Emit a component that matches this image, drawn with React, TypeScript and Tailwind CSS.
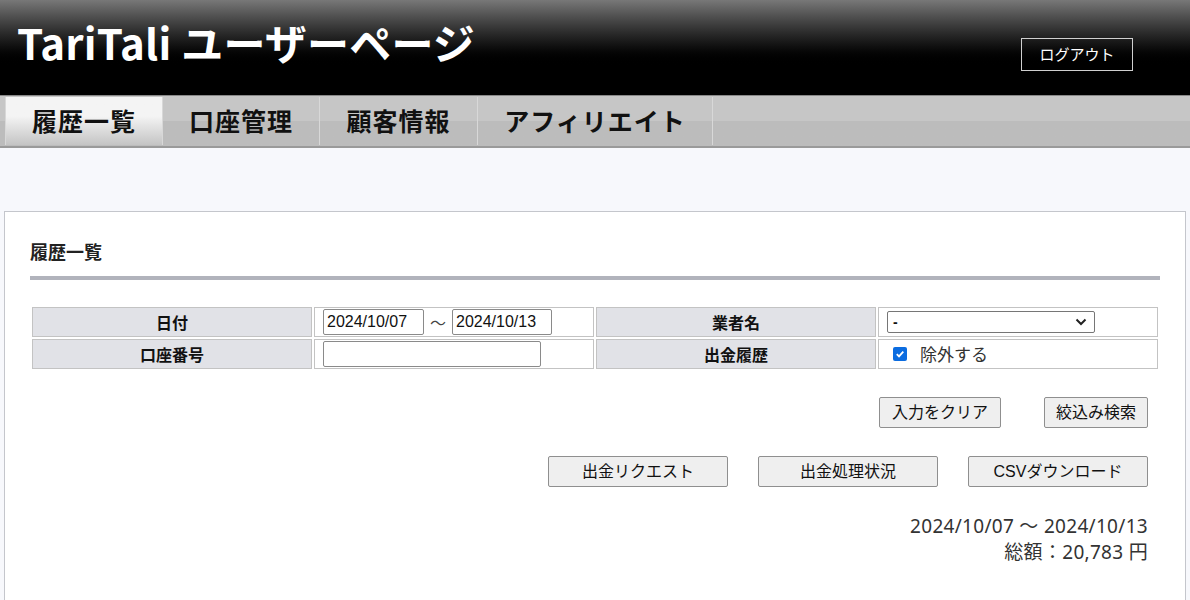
import React from "react";

const jp = { fontFamily: '"Noto Sans CJK JP", sans-serif' };
const ui = { fontFamily: '"Liberation Sans", Arial, "Noto Sans CJK JP", sans-serif' };

function Tab({ label, active, w }: { label: string; active?: boolean; w: string }) {
  return (
    <div
      className={`${w} h-full flex items-center justify-center border-r border-[#d8d8d8] ${
        active ? "bg-gradient-to-b from-[#f4f4f4] from-40% to-[#c4c4c4]" : ""
      }`}
    >
      <span className="text-[25px] font-bold text-[#111] tracking-[1px]" style={jp}>
        {label}
      </span>
    </div>
  );
}

function Btn({ children, w }: { children: React.ReactNode; w: string }) {
  return (
    <button
      className={`${w} h-[31px] bg-[#efefef] border border-[#8f8f8f] rounded-[2px] text-[16px] text-[#111] flex items-center justify-center`}
      style={ui}
    >
      {children}
    </button>
  );
}

export default function App() {
  return (
    <div className="w-[1190px] h-[600px] overflow-hidden bg-[#f7f8fc]" style={jp}>
      {/* Header */}
      <div className="h-[95px] bg-gradient-to-b from-[#787878] to-[#000] to-70% flex items-start justify-between pl-[17px] pr-[57px]">
        <div className="mt-[13px] text-[42px] font-bold text-white leading-[57px] tracking-[0.2px]" style={jp}>
          TariTali ユーザーページ
        </div>
        <div className="mt-[38px] w-[112px] h-[33px] border border-[#d0d0d0] flex items-center justify-center text-white text-[15px]">
          ログアウト
        </div>
      </div>
      {/* Nav */}
      <div className="h-[53px] border-t border-[#888] border-b-2 border-b-[#9a9a9a] bg-gradient-to-b from-[#c6c6c6] from-50% to-[#bcbcbc] to-50% flex pl-[5px] py-[1px]">
        <div className="h-full border-l border-[#d8d8d8]" />
        <Tab label="履歴一覧" active w="w-[157px]" />
        <Tab label="口座管理" w="w-[157px]" />
        <Tab label="顧客情報" w="w-[158px]" />
        <Tab label="アフィリエイト" w="w-[235px]" />
      </div>
      {/* Body */}
      <div className="pt-[63px]">
        <div className="ml-[4px] w-[1182px] h-[400px] bg-white border border-[#c4c6cc] px-[25px] pt-[24px]">
          <div className="text-[18px] font-bold text-[#222] leading-[30px]">履歴一覧</div>
          <div className="mt-[10px] h-[4px] bg-[#b1b3bc]" />
          <table className="mt-[25px] w-[1130px] border-separate border-spacing-[2px] table-fixed">
            <tbody>
              <tr className="h-[30px]">
                <td className="w-[280px] bg-[#e1e2e7] border border-[#c3c3c3] text-center text-[16px] font-bold text-[#111]">日付</td>
                <td className="w-[280px] border border-[#c3c3c3] pl-[8px]">
                  <div className="flex items-center" style={ui}>
                    <input
                      className="w-[101px] h-[26px] border border-[#8a8a8a] rounded-[2px] px-[3px] text-[16px] text-[#111]"
                      defaultValue="2024/10/07"
                      style={ui}
                    />
                    <span className="mx-[6px] text-[16px] text-[#444]" style={jp}>～</span>
                    <input
                      className="w-[100px] h-[26px] border border-[#8a8a8a] rounded-[2px] px-[3px] text-[16px] text-[#111]"
                      defaultValue="2024/10/13"
                      style={ui}
                    />
                  </div>
                </td>
                <td className="w-[280px] bg-[#e1e2e7] border border-[#c3c3c3] text-center text-[16px] font-bold text-[#111]">業者名</td>
                <td className="w-[280px] border border-[#c3c3c3] pl-[8px]">
                  <div className="w-[208px] h-[22px] border border-[#767676] rounded-[2px] flex items-center justify-between pl-[5px] pr-[7px]" style={ui}>
                    <span className="text-[14px] font-bold text-[#111] leading-none">-</span>
                    <svg width="12" height="8" viewBox="0 0 12 8">
                      <path d="M1.5 1.5 L6 6 L10.5 1.5" fill="none" stroke="#222" strokeWidth="2" />
                    </svg>
                  </div>
                </td>
              </tr>
              <tr className="h-[30px]">
                <td className="bg-[#e1e2e7] border border-[#c3c3c3] text-center text-[16px] font-bold text-[#111]">口座番号</td>
                <td className="border border-[#c3c3c3] pl-[8px]">
                  <input className="w-[218px] h-[26px] border border-[#8a8a8a] rounded-[2px] block" />
                </td>
                <td className="bg-[#e1e2e7] border border-[#c3c3c3] text-center text-[16px] font-bold text-[#111]">出金履歴</td>
                <td className="border border-[#c3c3c3] pl-[14px]">
                  <div className="flex items-center">
                    <div className="w-[14px] h-[14px] rounded-[2px] bg-[#0b6ce0] flex items-center justify-center">
                      <svg width="10" height="10" viewBox="0 0 10 10">
                        <path d="M1.8 5.2 L4 7.4 L8.3 2.6" fill="none" stroke="#fff" strokeWidth="1.8" />
                      </svg>
                    </div>
                    <span className="ml-[13px] text-[17px] text-[#333]">除外する</span>
                  </div>
                </td>
              </tr>
            </tbody>
          </table>
          <div className="mt-[26px] flex justify-end pr-[12px] gap-[43px]">
            <Btn w="w-[122px]">入力をクリア</Btn>
            <Btn w="w-[104px]">絞込み検索</Btn>
          </div>
          <div className="mt-[28px] flex justify-end pr-[12px] gap-[30px]">
            <Btn w="w-[180px]">出金リクエスト</Btn>
            <Btn w="w-[180px]">出金処理状況</Btn>
            <Btn w="w-[180px]">CSVダウンロード</Btn>
          </div>
          <div className="mt-[26px] pr-[12px] text-right text-[19px] tracking-[0.3px] text-[#333] leading-[26px]" style={{ fontFamily: '"Noto Sans", "Noto Sans CJK JP", sans-serif' }}>
            <div>2024/10/07 ～ 2024/10/13</div>
            <div>総額：20,783 円</div>
          </div>
        </div>
      </div>
    </div>
  );
}
